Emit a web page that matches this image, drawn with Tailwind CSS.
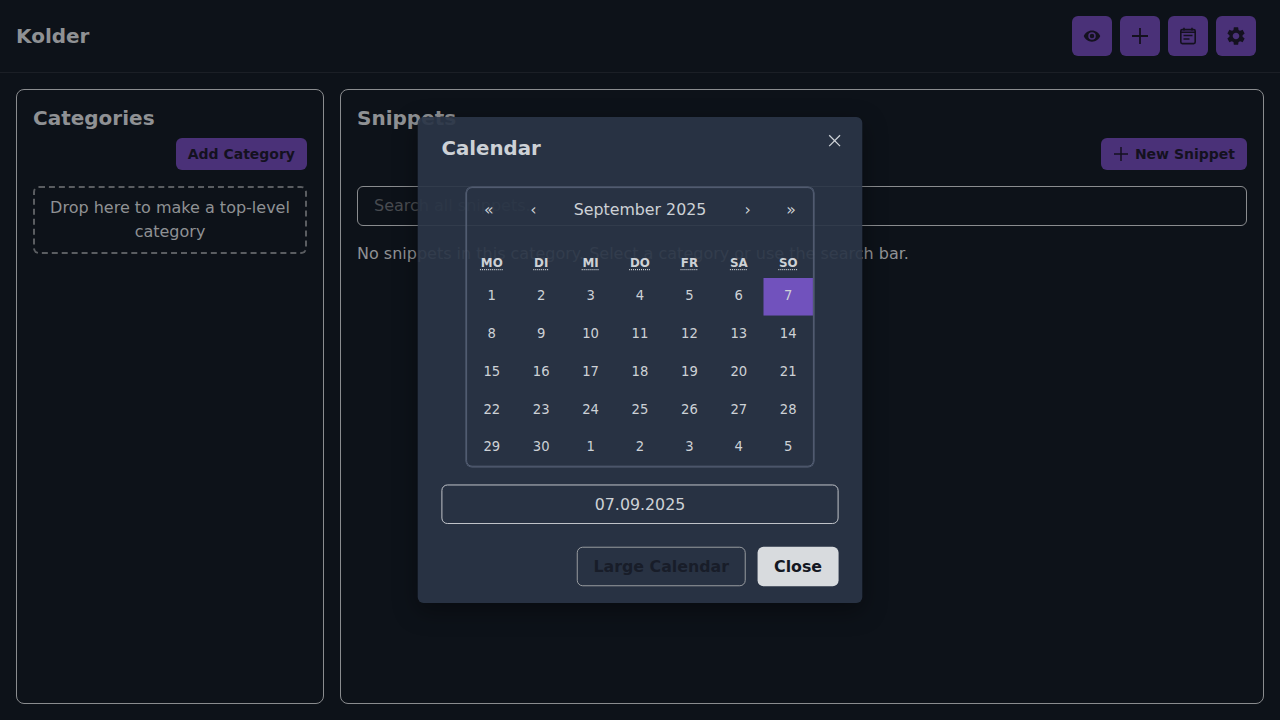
<!DOCTYPE html>
<html><head><meta charset="utf-8">
<script src="https://cdn.jsdelivr.net/npm/@tailwindcss/browser@4"></script>
</head>
<body class="relative h-[720px] w-[1280px] overflow-hidden bg-[#0d1219] font-['DejaVu_Sans',sans-serif] text-[#8f9194]">
<header class="flex h-[73px] items-center justify-between border-b border-[#1b1f26] px-4">
  <h1 class="text-[20px] font-bold">Kolder</h1>
  <div class="mr-2 flex gap-2">
    <div class="flex h-10 w-10 items-center justify-center rounded-md bg-[#4a3178] text-[#14111f]"><svg width="18" height="18" viewBox="0 0 24 24" fill="currentColor"><path fill-rule="evenodd" d="M12 4.5C7 4.5 2.7 7.6 1 12c1.700 4.400 6 7.500 11 7.500s9.300-3.100 11-7.500c-1.700-4.400-6-7.500-11-7.500zM12 17a5 5 0 1 1 0-10 5 5 0 0 1 0 10zm0-8a3 3 0 1 0 0 6 3 3 0 0 0 0-6z"/></svg></div>
    <div class="flex h-10 w-10 items-center justify-center rounded-md bg-[#4a3178] text-[#14111f]"><svg width="20" height="20" viewBox="0 0 20 20" fill="none" stroke="currentColor" stroke-width="1.800"><path d="M10 2v16M2 10h16"/></svg></div>
    <div class="flex h-10 w-10 items-center justify-center rounded-md bg-[#4a3178] text-[#14111f]"><svg width="20" height="20" viewBox="0 0 20 20" fill="none" stroke="currentColor" stroke-width="1.600"><rect x="2.800" y="3.600" width="14.400" height="14" rx="1.500"/><path d="M6 1.800v2.600M14 1.800v2.600M2.800 6.200h14.400"/><path d="M5.500 9.500h9M5.500 13h6"/></svg></div>
    <div class="flex h-10 w-10 items-center justify-center rounded-md bg-[#4a3178] text-[#14111f]"><svg width="22" height="22" viewBox="0 0 24 24" fill="currentColor"><path d="M19.14 12.94c.04-.3.06-.61.06-.94 0-.32-.02-.64-.07-.94l2.03-1.58a.49.49 0 0 0 .12-.61l-1.920-3.320a.488.488 0 0 0-.59-.22l-2.390.96c-.5-.38-1.030-.7-1.620-.94l-.36-2.540a.484.484 0 0 0-.48-.41h-3.840c-.24 0-.43.17-.47.41l-.36 2.540c-.59.24-1.130.57-1.620.94l-2.390-.96c-.22-.08-.47 0-.59.22L2.740 8.870c-.12.21-.08.47.12.61l2.030 1.580c-.05.3-.09.63-.09.94s.02.64.07.94l-2.030 1.580a.49.49 0 0 0-.12.61l1.920 3.320c.12.22.37.29.59.22l2.390-.96c.5.38 1.030.7 1.620.94l.36 2.540c.05.24.24.41.48.41h3.840c.24 0 .44-.17.47-.41l.36-2.540c.59-.24 1.130-.56 1.620-.94l2.390.96c.22.08.47 0 .59-.22l1.920-3.320c.12-.22.07-.47-.12-.61l-2.010-1.580zM12 15.600c-1.980 0-3.600-1.620-3.600-3.600s1.620-3.600 3.600-3.600 3.600 1.620 3.600 3.600-1.620 3.600-3.600 3.600z"/></svg></div>
  </div>
</header>
<main class="flex h-[647px] gap-4 p-4">
  <section class="w-[308px] rounded-lg border border-[#8a8c8f] p-4">
    <h2 class="h-[24px] text-[20px] leading-[24px] font-bold">Categories</h2>
    <div class="mt-2 flex justify-end"><button class="h-8 rounded-md bg-[#4a3178] px-3 text-[14px] font-bold text-[#14111f]">Add Category</button></div>
    <div class="mt-4 rounded-md border-2 border-dashed border-[#5a5d61] px-2 py-[8px] text-center text-[16px] leading-6">Drop here to make a top-level category</div>
  </section>
  <section class="flex-1 rounded-lg border border-[#8a8c8f] p-4">
    <h2 class="h-[24px] text-[20px] leading-[24px] font-bold">Snippets</h2>
    <div class="mt-2 flex justify-end"><button class="flex h-8 items-center gap-[6px] rounded-md bg-[#4a3178] px-3 text-[14px] font-bold text-[#14111f]"><svg width="16" height="16" viewBox="0 0 16 16" fill="none" stroke="currentColor" stroke-width="1.500"><path d="M8 1v14M1 8h14"/></svg>New Snippet</button></div>
    <div class="mt-4 flex h-10 items-center rounded-md border border-[#8a8c8f] px-4 text-[16px] text-[#484b50]">Search all snippets...</div>
    <p class="mt-4 text-[16px] leading-6">No snippets in this category. Select a category or use the search bar.</p>
  </section>
</main>
<div class="absolute left-[415px] top-[114px] h-[492px] w-[450px] scale-[0.988] rounded-md bg-[#2a3546]/92 px-6 pt-[16.400px] text-[#cdd1d6] shadow-[0_8px_24px_rgba(0,0,0,0.35)]">
  <div class="flex items-start justify-between">
    <h3 class="text-[20px] leading-[32px] font-bold">Calendar</h3>
    <svg class="mt-[0px] mr-[-4.400px]" width="16" height="16" viewBox="0 0 16 16" fill="none" stroke="currentColor" stroke-width="1.300"><path d="M2.500 2.500l11 11M13.500 2.500l-11 11"/></svg>
  </div>
  <div class="mx-auto mt-[22.500px] h-[283.400px] w-[352px] rounded-md border border-[#566176] ring-[0.7px] ring-[#566176]">
    <div class="flex h-11 items-center text-center text-[16px]">
      <span class="w-11">«</span><span class="w-11 pl-[2px]">‹</span><span class="flex-1">September 2025</span><span class="w-11">›</span><span class="w-11">»</span>
    </div>
    <div class="mt-4 grid h-[31.100px] grid-cols-7 items-center pt-[2px] text-center text-[12px] font-bold">
      <span><span class="underline decoration-dotted">MO</span></span><span><span class="underline decoration-dotted">DI</span></span><span><span class="underline decoration-dotted">MI</span></span><span><span class="underline decoration-dotted">DO</span></span><span><span class="underline decoration-dotted">FR</span></span><span><span class="underline decoration-dotted">SA</span></span><span><span class="underline decoration-dotted">SO</span></span>
    </div>
    <div class="grid grid-cols-7 auto-rows-[38.260px] items-stretch text-center text-[13.330px]">
      <span class="flex items-center justify-center pb-[1.500px]">1</span><span class="flex items-center justify-center pb-[1.500px]">2</span><span class="flex items-center justify-center pb-[1.500px]">3</span><span class="flex items-center justify-center pb-[1.500px]">4</span><span class="flex items-center justify-center pb-[1.500px]">5</span><span class="flex items-center justify-center pb-[1.500px]">6</span><span class="flex items-center justify-center bg-[#7152bd] pb-[1.500px]">7</span>
      <span class="flex items-center justify-center pb-[1.500px]">8</span><span class="flex items-center justify-center pb-[1.500px]">9</span><span class="flex items-center justify-center pb-[1.500px]">10</span><span class="flex items-center justify-center pb-[1.500px]">11</span><span class="flex items-center justify-center pb-[1.500px]">12</span><span class="flex items-center justify-center pb-[1.500px]">13</span><span class="flex items-center justify-center pb-[1.500px]">14</span>
      <span class="flex items-center justify-center pb-[1.500px]">15</span><span class="flex items-center justify-center pb-[1.500px]">16</span><span class="flex items-center justify-center pb-[1.500px]">17</span><span class="flex items-center justify-center pb-[1.500px]">18</span><span class="flex items-center justify-center pb-[1.500px]">19</span><span class="flex items-center justify-center pb-[1.500px]">20</span><span class="flex items-center justify-center pb-[1.500px]">21</span>
      <span class="flex items-center justify-center pb-[0.400px]">22</span><span class="flex items-center justify-center pb-[0.400px]">23</span><span class="flex items-center justify-center pb-[0.400px]">24</span><span class="flex items-center justify-center pb-[0.400px]">25</span><span class="flex items-center justify-center pb-[0.400px]">26</span><span class="flex items-center justify-center pb-[0.400px]">27</span><span class="flex items-center justify-center pb-[0.400px]">28</span>
      <span class="flex items-center justify-center pb-[1.500px]">29</span><span class="flex items-center justify-center pb-[1.500px]">30</span><span class="flex items-center justify-center pb-[1.500px]">1</span><span class="flex items-center justify-center pb-[1.500px]">2</span><span class="flex items-center justify-center pb-[1.500px]">3</span><span class="flex items-center justify-center pb-[1.500px]">4</span><span class="flex items-center justify-center pb-[1.500px]">5</span>
    </div>
  </div>
  <div class="mt-[17.700px] flex h-10 items-center justify-center rounded-md border border-[#c3c6cb] pt-[3px] text-[16px]">07.09.2025</div>
  <div class="mt-[23.500px] flex justify-end gap-3">
    <button class="h-10 w-[171px] rounded-md border border-[#9a9da2] pt-[2px] text-[16px] font-bold text-[#181d29]">Large Calendar</button>
    <button class="h-10 w-[82px] rounded-md bg-[#d8dbde] pt-[2px] text-[16px] font-bold text-[#131722]">Close</button>
  </div>
</div>
</body></html>
